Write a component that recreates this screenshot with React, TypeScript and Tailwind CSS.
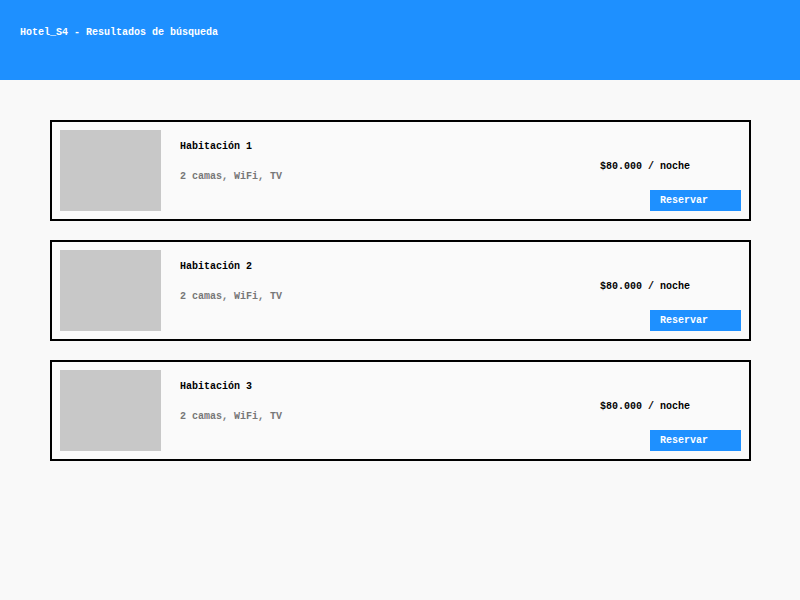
import React from "react";

const rooms = [
  { name: "Habitación 1", desc: "2 camas, WiFi, TV", price: "$80.000 / noche" },
  { name: "Habitación 2", desc: "2 camas, WiFi, TV", price: "$80.000 / noche" },
  { name: "Habitación 3", desc: "2 camas, WiFi, TV", price: "$80.000 / noche" },
];

const App = () => {
  return (
    <div className="min-h-[600px] bg-[#f9f9f9] font-['Liberation_Mono',monospace] text-[10px] font-bold">
      <header className="h-[80px] bg-[#1e90ff] px-5 pt-[22px] leading-[22px] text-white">
        Hotel_S4 - Resultados de búsqueda
      </header>
      <main className="ml-[50px] mt-10 flex w-[701px] flex-col gap-[19px]">
        {rooms.map((room) => (
          <div
            key={room.name}
            className="flex h-[101px] border-2 border-black bg-[#fafafa] p-2"
          >
            <div className="h-[81px] w-[101px] bg-[#c8c8c8]" />
            <div className="ml-[19px] flex flex-1 flex-col pt-[10px] leading-[14px]">
              <p className="text-black">{room.name}</p>
              <p className="mt-4 text-[#777]">{room.desc}</p>
            </div>
            <div className="flex w-[141px] flex-col pt-[30px] leading-[14px]">
              <p className="text-black">{room.price}</p>
              <button className="mt-[16px] h-[21px] w-[91px] self-end bg-[#1e90ff] pl-[10px] text-left text-white">
                Reservar
              </button>
            </div>
          </div>
        ))}
      </main>
    </div>
  );
};

export default App;
